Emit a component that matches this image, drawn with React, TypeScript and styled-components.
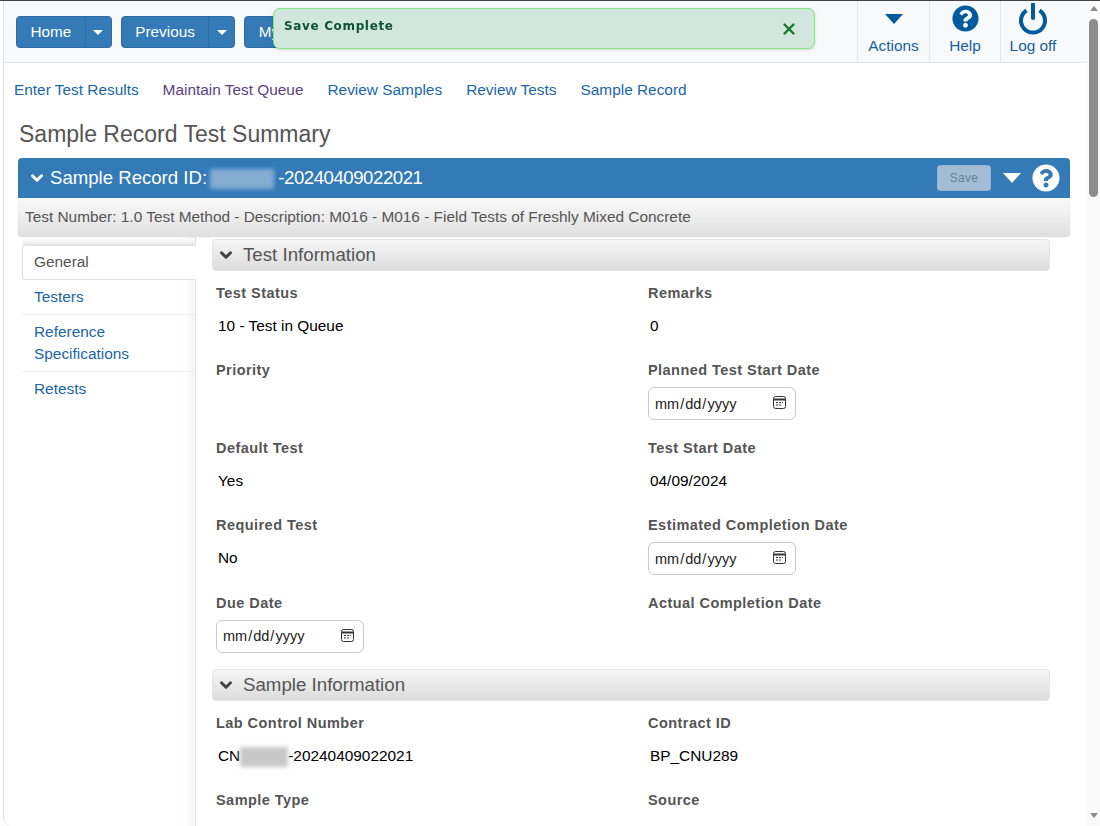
import React from 'react';
import styled, { createGlobalStyle } from 'styled-components';
import { FaQuestionCircle } from 'react-icons/fa';
import { ChevronDown, X } from 'lucide-react';

const GlobalStyle = createGlobalStyle`
  html, body {
    margin: 0;
    height: 100%;
    overflow: hidden;
    background: #fff;
  }
  * {
    box-sizing: border-box;
  }
  body {
    font-family: "Liberation Sans", Arial, sans-serif;
    font-size: 15.4px;
    color: #000;
  }
`;

const Shell = styled.div`
  display: flex;
  width: 1100px;
  height: 826px;
  border-top: 1px solid #444;
  overflow: hidden;
`;

const Page = styled.div`
  width: 1087px;
  height: 825px;
  padding-left: 3px;
  overflow: hidden;
`;

const Frame = styled.div`
  height: 825px;
  overflow: hidden;
  border-left: 1px solid #e2e2e2;
  border-radius: 0 0 0 8px;
`;

const TopBar = styled.header`
  display: flex;
  justify-content: space-between;
  height: 62px;
  background: #f8f9fb;
  border-bottom: 1px solid #e5e6e8;
  padding: 0 22px 0 12px;
`;

const ButtonRow = styled.div`
  display: flex;
  gap: 9px;
  padding-top: 15px;
`;

const SplitButton = styled.div`
  display: flex;
  height: 32px;
  color: #fff;
  background: #337ab7;
  border: 1px solid #2e6da4;
  border-radius: 4px;
  font-size: 15.3px;
  line-height: 30px;
`;

const ButtonLabel = styled.span`
  padding: 0 13.5px;
`;

const Caret = styled.span<{ $width?: number; $height?: number; $color?: string }>`
  display: block;
  width: 0;
  height: 0;
  border-left: ${(p) => (p.$width ?? 10) / 2}px solid transparent;
  border-right: ${(p) => (p.$width ?? 10) / 2}px solid transparent;
  border-top: ${(p) => p.$height ?? 5}px solid ${(p) => p.$color ?? '#fff'};
`;

const ButtonCaret = styled.span`
  display: flex;
  align-items: center;
  justify-content: center;
  width: 26px;
  border-left: 1px solid #2e6da4;
`;

const ActionRow = styled.div`
  display: flex;
  height: 61px;
`;

const Action = styled.div<{ $width: number }>`
  display: flex;
  flex-direction: column;
  align-items: center;
  width: ${(p) => p.$width}px;
  border-left: 1px solid #e5e6e8;
  color: #195f9f;
  font-size: 15.4px;
`;

const ActionIcon = styled.div`
  display: flex;
  align-items: center;
  justify-content: center;
  height: 35px;
  color: #005a9e;
`;

const ActionLabel = styled.span`
  line-height: 18px;
  margin-top: 1px;
`;

const Toast = styled.div`
  position: fixed;
  left: 273px;
  top: 8px;
  width: 542px;
  height: 41px;
  display: flex;
  justify-content: space-between;
  padding: 11px 16px 0 10px;
  background: #d1e7dd;
  border: 1px solid #7fe87f;
  border-radius: 7px;
  box-shadow: 0 1px 3px rgba(0, 0, 0, 0.15);
  color: #0f5132;
  font-family: "DejaVu Sans", sans-serif;
  font-size: 12px;
  line-height: 13px;
  font-weight: 700;
  letter-spacing: 0.65px;
`;

const Links = styled.nav`
  display: flex;
  gap: 24px;
  padding: 18px 0 0 10px;
  height: 54px;
  line-height: 18px;
`;

const NavLink = styled.a<{ $visited?: boolean }>`
  color: ${(p) => (p.$visited ? '#5b3f82' : '#1b66a6')};
  font-size: 15.4px;
`;

const PageTitle = styled.h1`
  margin: 0;
  padding-left: 15px;
  height: 41px;
  font-size: 23px;
  font-weight: 400;
  line-height: 35px;
  color: #555;
`;

const PanelHead = styled.div`
  display: flex;
  align-items: center;
  margin-left: 14px;
  width: 1052px;
  height: 40px;
  padding: 0 10px;
  background: #337ab7;
  border-radius: 4px 4px 0 0;
  color: #fff;
  font-size: 18.6px;
`;

const HeadTitle = styled.div`
  display: flex;
  align-items: center;
  gap: 4px;
  flex: 1;
`;

const Redacted = styled.span<{ $width: number; $color: string }>`
  display: inline-block;
  width: ${(p) => p.$width}px;
  height: 20px;
  background: ${(p) => p.$color};
  filter: blur(2px);
  vertical-align: middle;
`;

const HeadRedacted = styled(Redacted)`
  margin: 0 4px 0 -2px;
`;

const HeadNumber = styled.span`
  letter-spacing: -0.45px;
`;

const SaveButton = styled.button`
  width: 54px;
  height: 26px;
  margin-right: 12px;
  padding: 0;
  background: #a3bcd5;
  border: 1px solid #98b3cf;
  border-radius: 3px;
  color: #6b7f95;
  font: 12px "Liberation Sans", Arial, sans-serif;
  letter-spacing: 0.3px;
`;

const HeadHelp = styled(FaQuestionCircle)`
  margin-left: 11px;
`;

const PanelSub = styled.div`
  margin-left: 14px;
  width: 1052px;
  height: 39px;
  padding-left: 7px;
  background: linear-gradient(#fafafa, #dfdfdf);
  border-radius: 0 0 4px 4px;
  box-shadow: 0 0 1px rgba(0, 0, 0, 0.3);
  color: #555;
  line-height: 38px;
`;

const Body = styled.div`
  display: flex;
  margin-left: 18px;
  height: 600px;
`;

const SideNav = styled.aside`
  width: 174px;
  flex: none;
  padding-top: 2px;
  border-right: 1px solid #e3e3e3;
  box-shadow: inset -14px 0 14px -12px rgba(0, 0, 0, 0.08);
  height: 600px;
`;

const SideCap = styled.div`
  height: 6px;
  background: linear-gradient(#fff, #e6e6e6);
`;

const SideItem = styled.div<{ $active?: boolean }>`
  padding: 6px 12px;
  margin-right: ${(p) => (p.$active ? '-1px' : '0')};
  line-height: 22px;
  color: ${(p) => (p.$active ? '#555' : '#1b66a6')};
  background: ${(p) => (p.$active ? '#fff' : 'transparent')};
  border: ${(p) => (p.$active ? '1px solid #e0e0e0' : 'none')};
  border-right: ${(p) => (p.$active ? '1px solid #fff' : 'none')};
  border-radius: ${(p) => (p.$active ? '4px 0 0 4px' : '0')};
  border-bottom: 1px solid ${(p) => (p.$active ? '#e0e0e0' : '#f0f0f0')};
  padding-left: ${(p) => (p.$active ? '11px' : '12px')};
  padding-top: ${(p) => (p.$active ? '5px' : '6px')};

  &:last-child {
    border-bottom: none;
  }
`;

const Content = styled.main`
  width: 838px;
  margin-left: 16px;
  padding-top: 2px;
  flex: none;
`;

const SectionBar = styled.div`
  display: flex;
  align-items: center;
  gap: 8px;
  height: 32px;
  padding-left: 4px;
  background: linear-gradient(#f6f6f6, #dcdcdc);
  border: 1px solid #e4e4e4;
  border-radius: 4px;
  color: #555;
  font-size: 18.7px;
`;

const FieldGrid = styled.div`
  display: grid;
  grid-template-columns: 432px 1fr;
  grid-auto-rows: 77.5px;
  padding: 12.7px 0 0 4px;
  height: 398px;
`;

const Field = styled.div`
  display: flex;
  flex-direction: column;
  align-items: flex-start;
`;

const FieldLabel = styled.label`
  height: 18px;
  color: #555;
  font-size: 14.5px;
  font-weight: 700;
  letter-spacing: 0.45px;
  line-height: 18px;
`;

const FieldValue = styled.div`
  margin-top: 15px;
  padding-left: 2px;
  line-height: 18px;
  font-size: 15.4px;
`;

const DateBox = styled.div`
  position: relative;
  margin-top: 8px;
`;

const DateInput = styled.input`
  display: block;
  width: 148px;
  height: 33px;
  padding: 0 5px;
  background: #fff;
  border: 1px solid #c9c9c9;
  border-radius: 6px;
  color: #222;
  font: 14.5px "Liberation Sans", Arial, sans-serif;

  &::-webkit-calendar-picker-indicator {
    opacity: 0;
  }
`;

const CalendarIcon = styled.svg`
  position: absolute;
  right: 10px;
  top: 9px;
  pointer-events: none;
`;

const Scrollbar = styled.div`
  display: flex;
  flex-direction: column;
  align-items: center;
  width: 13px;
  height: 825px;
  background: #fafafa;
`;

const ScrollThumb = styled.div`
  width: 9px;
  height: 178px;
  margin-top: 8px;
  background: #8c8c8c;
  border-radius: 5px;
`;

const ScrollArrow = styled.span<{ $down?: boolean }>`
  width: 0;
  height: 0;
  margin-top: ${(p) => (p.$down ? 'auto' : '5px')};
  margin-bottom: ${(p) => (p.$down ? '8px' : '0')};
  border-left: 4.5px solid transparent;
  border-right: 4.5px solid transparent;
  ${(p) => (p.$down ? 'border-top' : 'border-bottom')}: 5px solid #8c8c8c;
`;

const PowerIcon = () => (
  <svg width="30" height="32" viewBox="0 0 30 32" fill="none" stroke="#005a9e" strokeWidth="4">
    <path d="M8.5 7.5a12 12 0 1 0 13 0" />
    <path d="M15 1v14" strokeLinecap="round" />
  </svg>
);

const Calendar = () => (
  <CalendarIcon width="13" height="13" viewBox="0 0 13 13" fill="none" stroke="#333">
    <rect x="0.5" y="0.5" width="12" height="12" rx="2" />
    <path d="M1 3.5h11" strokeWidth="2" />
    <path d="M3 6.5h2M6 6.5h2M9 6.5h1M3 9h2M6 9h2" />
  </CalendarIcon>
);

type FieldData = { label: string; value?: React.ReactNode; date?: boolean };

const testFields: FieldData[] = [
  { label: 'Test Status', value: '10 - Test in Queue' },
  { label: 'Remarks', value: '0' },
  { label: 'Priority' },
  { label: 'Planned Test Start Date', date: true },
  { label: 'Default Test', value: 'Yes' },
  { label: 'Test Start Date', value: '04/09/2024' },
  { label: 'Required Test', value: 'No' },
  { label: 'Estimated Completion Date', date: true },
  { label: 'Due Date', date: true },
  { label: 'Actual Completion Date' },
];

const sampleFields: FieldData[] = [
  {
    label: 'Lab Control Number',
    value: (
      <>
        CN
        <Redacted $width={48} $color="#c8c8c8" />
        -20240409022021
      </>
    ),
  },
  { label: 'Contract ID', value: 'BP_CNU289' },
  { label: 'Sample Type' },
  { label: 'Source' },
];

const FieldList = ({ fields }: { fields: FieldData[] }) => (
  <>
    {fields.map((f) => (
      <Field key={f.label}>
        <FieldLabel>{f.label}</FieldLabel>
        {f.value && <FieldValue>{f.value}</FieldValue>}
        {f.date && (
          <DateBox>
            <DateInput type="date" />
            <Calendar />
          </DateBox>
        )}
      </Field>
    ))}
  </>
);

export default function App() {
  return (
    <Shell>
      <GlobalStyle />
      <Page>
        <Frame>
          <TopBar>
            <ButtonRow>
              <SplitButton>
                <ButtonLabel>Home</ButtonLabel>
                <ButtonCaret>
                  <Caret />
                </ButtonCaret>
              </SplitButton>
              <SplitButton>
                <ButtonLabel>Previous</ButtonLabel>
                <ButtonCaret>
                  <Caret />
                </ButtonCaret>
              </SplitButton>
              <SplitButton>
                <ButtonLabel>My</ButtonLabel>
              </SplitButton>
            </ButtonRow>
            <ActionRow>
              <Action $width={72}>
                <ActionIcon>
                  <Caret $width={18} $height={10} $color="#005a9e" />
                </ActionIcon>
                <ActionLabel>Actions</ActionLabel>
              </Action>
              <Action $width={71}>
                <ActionIcon>
                  <FaQuestionCircle size={27} />
                </ActionIcon>
                <ActionLabel>Help</ActionLabel>
              </Action>
              <Action $width={65}>
                <ActionIcon>
                  <PowerIcon />
                </ActionIcon>
                <ActionLabel>Log off</ActionLabel>
              </Action>
            </ActionRow>
          </TopBar>
          <Toast>
            Save Complete
            <X size={18} strokeWidth={3.2} color="#157a2b" />
          </Toast>
          <Links>
            <NavLink>Enter Test Results</NavLink>
            <NavLink $visited>Maintain Test Queue</NavLink>
            <NavLink>Review Samples</NavLink>
            <NavLink>Review Tests</NavLink>
            <NavLink>Sample Record</NavLink>
          </Links>
          <PageTitle>Sample Record Test Summary</PageTitle>
          <PanelHead>
            <HeadTitle>
              <ChevronDown size={18} strokeWidth={4} />
              <span>
                Sample Record ID: <HeadRedacted $width={64} $color="#86acd2" />
                <HeadNumber>-20240409022021</HeadNumber>
              </span>
            </HeadTitle>
            <SaveButton disabled>Save</SaveButton>
            <Caret $width={18} $height={10} />
            <HeadHelp size={28} />
          </PanelHead>
          <PanelSub>Test Number: 1.0 Test Method - Description: M016 - M016 - Field Tests of Freshly Mixed Concrete</PanelSub>
          <Body>
            <SideNav>
              <SideCap />
              <SideItem $active>General</SideItem>
              <SideItem>Testers</SideItem>
              <SideItem>
                Reference
                <br />
                Specifications
              </SideItem>
              <SideItem>Retests</SideItem>
            </SideNav>
            <Content>
              <SectionBar>
                <ChevronDown size={18} strokeWidth={4} color="#444" />
                <span>Test Information</span>
              </SectionBar>
              <FieldGrid>
                <FieldList fields={testFields} />
              </FieldGrid>
              <SectionBar>
                <ChevronDown size={18} strokeWidth={4} color="#444" />
                <span>Sample Information</span>
              </SectionBar>
              <FieldGrid>
                <FieldList fields={sampleFields} />
              </FieldGrid>
            </Content>
          </Body>
        </Frame>
      </Page>
      <Scrollbar>
        <ScrollArrow />
        <ScrollThumb />
        <ScrollArrow $down />
      </Scrollbar>
    </Shell>
  );
}
